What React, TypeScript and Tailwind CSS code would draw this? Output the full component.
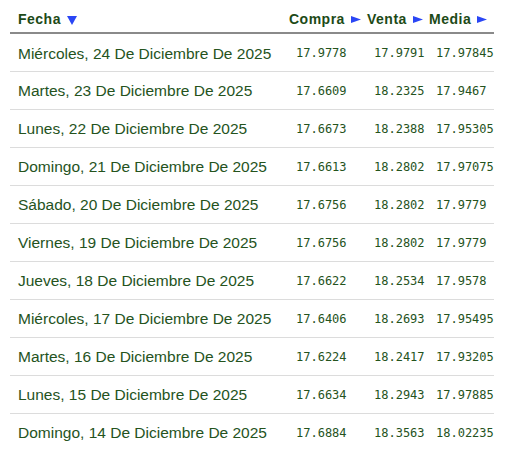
const rows: [string, string, string, string][] = [
  ['Miércoles, 24 De Diciembre De 2025', '17.9778', '17.9791', '17.97845'],
  ['Martes, 23 De Diciembre De 2025', '17.6609', '18.2325', '17.9467'],
  ['Lunes, 22 De Diciembre De 2025', '17.6673', '18.2388', '17.95305'],
  ['Domingo, 21 De Diciembre De 2025', '17.6613', '18.2802', '17.97075'],
  ['Sábado, 20 De Diciembre De 2025', '17.6756', '18.2802', '17.9779'],
  ['Viernes, 19 De Diciembre De 2025', '17.6756', '18.2802', '17.9779'],
  ['Jueves, 18 De Diciembre De 2025', '17.6622', '18.2534', '17.9578'],
  ['Miércoles, 17 De Diciembre De 2025', '17.6406', '18.2693', '17.95495'],
  ['Martes, 16 De Diciembre De 2025', '17.6224', '18.2417', '17.93205'],
  ['Lunes, 15 De Diciembre De 2025', '17.6634', '18.2943', '17.97885'],
  ['Domingo, 14 De Diciembre De 2025', '17.6884', '18.3563', '18.02235'],
]

// sort arrows
function Down() {
  return (
    <svg width="10" height="9" viewBox="0 0 10 9" className="mt-[1px]">
      <path d="M0 0h10L5 9z" fill="#2a46f5" />
    </svg>
  )
}

function Right() {
  return (
    <svg width="10" height="7" viewBox="0 0 10 7">
      <path d="M0 0l10 3.5L0 7z" fill="#2a46f5" />
    </svg>
  )
}

function Th({ label, down }: { label: string; down?: boolean }) {
  return (
    <th className="h-[33px] pl-2 pt-[6px] text-left align-middle whitespace-nowrap">
      <span className="inline-flex items-center gap-[6px] font-bold text-[14px] tracking-[0.5px] text-[#1d4a17]">
        {label}
        {down ? <Down /> : <Right />}
      </span>
    </th>
  )
}

export default function App() {
  return (
    <div className="bg-white px-[10px] font-['Liberation_Sans',Arial,sans-serif]">
      <table className="w-[484px] border-collapse table-fixed">
        <colgroup>
          <col className="w-[271px]" />
          <col className="w-[78px]" />
          <col className="w-[62px]" />
          <col className="w-[73px]" />
        </colgroup>
        <thead>
          <tr className="border-b-2 border-[#8a8a8a]">
            <Th label="Fecha" down />
            <Th label="Compra" />
            <Th label="Venta" />
            <Th label="Media" />
          </tr>
        </thead>
        <tbody>
          {rows.map((r) => (
            <tr key={r[0]} className="h-[38px] border-b border-[#dcdcdc]">
              <td className="pl-2 pt-[2px] text-[15.5px] text-[#25531d] whitespace-nowrap">{r[0]}</td>
              {r.slice(1).map((v, i) => (
                <td
                  key={i}
                  className="pl-[15px] pt-[2px] font-['DejaVu_Sans_Mono',monospace] text-[12px] text-[#25531d] whitespace-nowrap"
                >
                  {v}
                </td>
              ))}
            </tr>
          ))}
        </tbody>
      </table>
    </div>
  )
}
